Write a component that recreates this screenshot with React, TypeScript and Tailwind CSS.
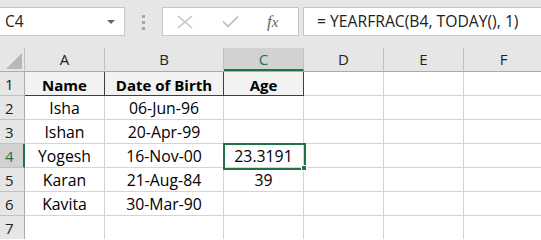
import React from "react";

const cols = [
  { key: "A", w: "w-[80px]" },
  { key: "B", w: "w-[119px]" },
  { key: "C", w: "w-[80px]" },
  { key: "D", w: "w-[80px]" },
  { key: "E", w: "w-[80px]" },
  { key: "F", w: "w-[80px]" },
];

const rows: string[][] = [
  ["Name", "Date of Birth", "Age"],
  ["Isha", "06-Jun-96", ""],
  ["Ishan", "20-Apr-99", ""],
  ["Yogesh", "16-Nov-00", "23.3191"],
  ["Karan", "21-Aug-84", "39"],
  ["Kavita", "30-Mar-90", ""],
  ["", "", ""],
];

function Toolbar() {
  return (
    <div className="flex h-[48px] items-start bg-[#e6e6e6] pt-[7px]">
      <div className="flex h-[29px] w-[125px] items-center justify-between border border-l-0 border-[#c6c6c6] bg-white pl-[5px] pr-[9px]">
        <span className="text-[15.5px] text-[#222]">C4</span>
        <span className="h-0 w-0 border-x-[4px] border-t-[4px] border-x-transparent border-t-[#666]" />
      </div>
      <div className="flex w-[37px] flex-col items-center gap-[3px] pt-[8px]">
        <span className="h-[3px] w-[3px] bg-[#a6a6a6]" />
        <span className="h-[3px] w-[3px] bg-[#a6a6a6]" />
        <span className="h-[3px] w-[3px] bg-[#a6a6a6]" />
      </div>
      <div className="flex h-[29px] w-[137px] items-center border border-[#c6c6c6] bg-white">
        <svg className="ml-[14px]" width="16" height="14" viewBox="0 0 16 14">
          <path d="M1 1 L15 13 M15 1 L1 13" stroke="#c4c4c4" strokeWidth="1.6" fill="none" />
        </svg>
        <svg className="ml-[29px]" width="17" height="13" viewBox="0 0 17 13">
          <path d="M1 6.5 L6 11.5 L16 1.5" stroke="#c4c4c4" strokeWidth="1.8" fill="none" />
        </svg>
        <span className="ml-[28px] font-['Liberation_Serif',serif] text-[17px] italic text-[#666]">
          f<span className="text-[15px]">x</span>
        </span>
      </div>
      <div className="ml-[4px] flex h-[29px] flex-1 items-center border border-r-0 border-[#c6c6c6] bg-white pl-[13px]">
        <span className="text-[15.7px] text-[#222]">= YEARFRAC(B4, TODAY(), 1)</span>
      </div>
    </div>
  );
}

function ColumnHeader() {
  return (
    <div className="flex h-[24px] border-b border-[#ababab] bg-[#e6e6e6]">
      <div className="relative w-[25px] shrink-0 border-r border-[#c0c0c0]">
        <svg className="absolute left-[6px] top-[5px]" width="16" height="16" viewBox="0 0 16 16">
          <path d="M16 0 L16 16 L0 16 Z" fill="#b8b8b8" />
        </svg>
      </div>
      {cols.map((c) =>
        c.key === "C" ? (
          <div
            key={c.key}
            className={`${c.w} flex shrink-0 items-center justify-center border-b-2 border-r border-b-[#217346] border-r-[#c0c0c0] bg-[#d2d2d2] pt-[2px] text-[15px] text-[#217346]`}
          >
            {c.key}
          </div>
        ) : (
          <div
            key={c.key}
            className={`${c.w} flex shrink-0 items-center justify-center border-r border-[#c0c0c0] text-[15px] text-[#222]`}
          >
            {c.key}
          </div>
        )
      )}
    </div>
  );
}

function Row({ n, cells }: { n: number; cells: string[] }) {
  const active = n === 4;
  const head = n === 1;
  return (
    <div className="flex h-[24px]">
      <div
        className={
          active
            ? "flex w-[25px] shrink-0 items-center border-b border-r-2 border-b-[#c0c0c0] border-r-[#217346] bg-[#d2d2d2] pl-[5px] pt-[2px] text-[15px] text-[#217346]"
            : "flex w-[25px] shrink-0 items-center border-b border-r border-b-[#c0c0c0] border-r-[#ababab] bg-[#e6e6e6] pl-[5px] pt-[2px] text-[15px] text-[#222]"
        }
      >
        {n}
      </div>
      {cols.map((c, i) => {
        const value = cells[i] ?? "";
        if (head && i < 3) {
          return (
            <div
              key={c.key}
              className={`${c.w} flex shrink-0 items-center justify-center border-b border-r border-[#3f3f3f] bg-[#f2f2f2] pt-[3px] text-[15px] font-bold text-black`}
            >
              {value}
            </div>
          );
        }
        return (
          <div
            key={c.key}
            className={`${c.w} flex shrink-0 items-center justify-center border-b border-r border-[#d4d4d4] pt-[3px] text-[15.8px] text-black`}
          >
            {value}
          </div>
        );
      })}
    </div>
  );
}

export default function App() {
  return (
    <div className="relative h-[239px] w-[541px] overflow-hidden bg-white font-['Open_Sans',sans-serif]">
      <Toolbar />
      <ColumnHeader />
      {rows.map((cells, i) => (
        <Row key={i} n={i + 1} cells={cells} />
      ))}
      <div className="absolute left-[223px] top-[143px] h-[27px] w-[83px] border-2 border-[#217346]" />
      <div className="absolute left-[301px] top-[165px] h-[6px] w-[6px] border border-white bg-[#217346]" />
    </div>
  );
}
